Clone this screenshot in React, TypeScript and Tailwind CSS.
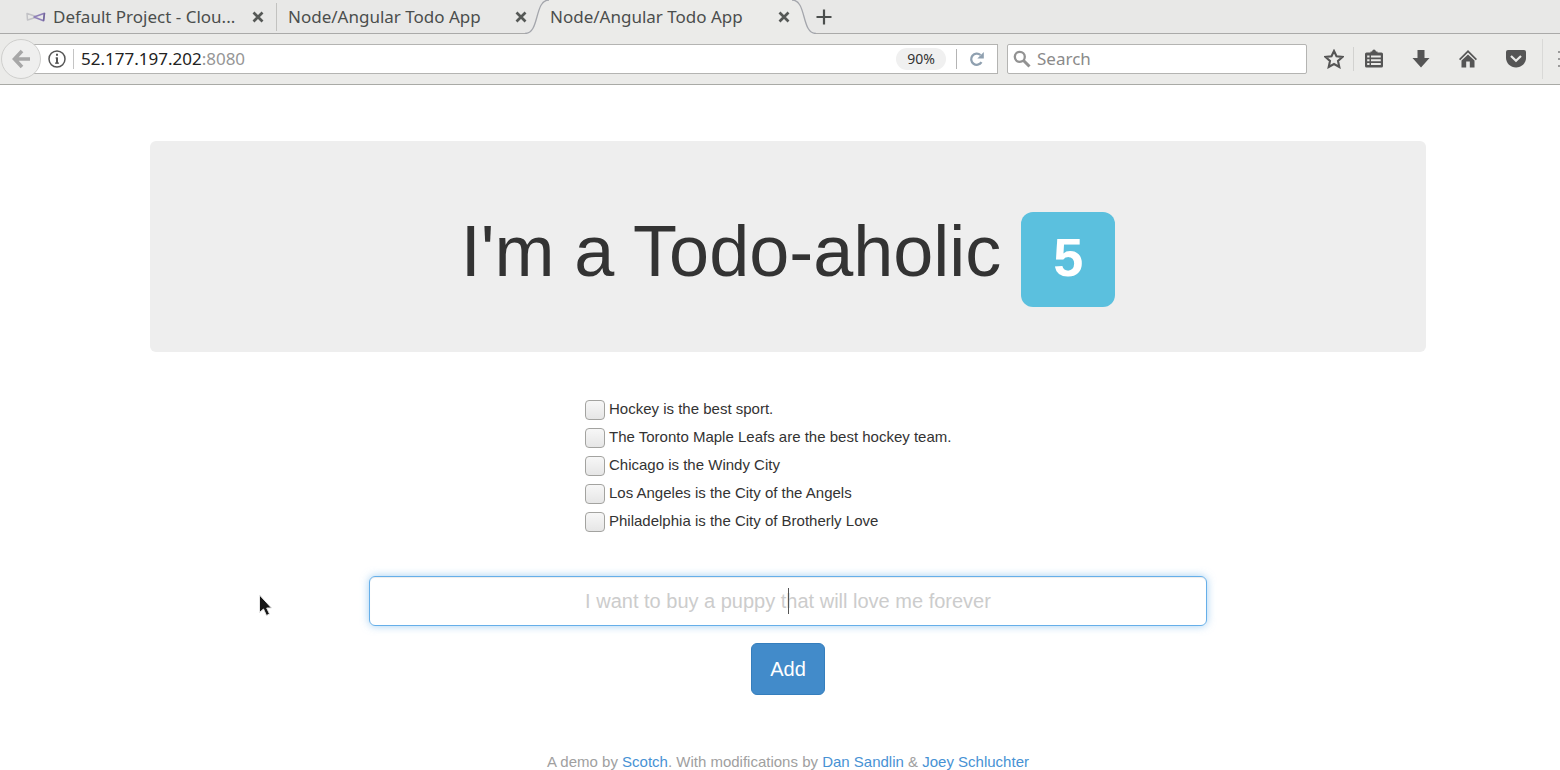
import React, { useState } from "react";

const chromeFont = "font-['Noto_Sans','Open_Sans',sans-serif]";

function CloseButton({ label }: { label: string }) {
  return (
    <button type="button" aria-label={label} className="flex h-4 w-4 shrink-0 items-center justify-center">
      <svg viewBox="0 0 12 12" className="h-3 w-3" fill="none" stroke="#555856" strokeWidth="2.7">
        <path d="M1.5 1.5 10.5 10.5M10.5 1.5 1.5 10.5" />
      </svg>
    </button>
  );
}

function TabStrip() {
  return (
    <nav aria-label="Tabs" className="flex h-[34px] bg-[#e8e8e7] text-[17px] leading-8 text-[#4b4e4d]">
      <div className="flex w-[276px] shrink-0 items-center border-b border-[#aaaaa9] pl-[26px] pr-[10px]">
        <svg viewBox="0 0 20 10" className="mr-[7px] h-[10px] w-5 shrink-0" fill="none" strokeWidth="1.5" strokeLinejoin="round">
          <path d="M9.500 4.300 1 1.500 1.500 8 9.500 5.500" stroke="#c2c2c6" />
          <path d="M8 5 18.500 1.200 17.500 8.800Z" stroke="#8f80b8" />
          <path d="M18.500 1.200 17.500 8.800" stroke="#73669c" />
        </svg>
        <span className="flex-1 whitespace-nowrap">Default Project - Clou...</span>
        <CloseButton label="Close Default Project" />
      </div>
      <div className="flex w-[253px] shrink-0 items-center border-b border-[#aaaaa9]">
        <span className="h-7 w-px bg-[#c2c2c0]" />
        <span className="ml-[11px] flex-1 whitespace-nowrap">Node/Angular Todo App</span>
        <CloseButton label="Close first Todo App tab" />
      </div>
      <div className="-ml-1 flex w-[291px] shrink-0 items-center justify-between">
        <svg viewBox="0 0 24 34" className="h-[34px] w-6 shrink-0">
          <path d="M0 33.500C15 33.500 9 0 24 0V34H0Z" fill="#ebebe9" />
          <path d="M0 33.500C15 33.500 9 0 24 0" fill="none" stroke="#a4a6ac" strokeWidth="1.300" />
        </svg>
        <div className="flex h-full flex-1 items-center bg-[#ebebe9] pl-px">
          <span className="flex-1 whitespace-nowrap">Node/Angular Todo App</span>
          <CloseButton label="Close current tab" />
        </div>
        <svg viewBox="0 0 24 34" className="h-[34px] w-6 shrink-0">
          <path d="M0 0C15 0 9 33.500 24 33.500V34H0Z" fill="#ebebe9" />
          <path d="M0 0C15 0 9 33.500 24 33.500" fill="none" stroke="#a4a6ac" strokeWidth="1.300" />
        </svg>
      </div>
      <div className="flex flex-1 items-center border-b border-[#aaaaa9]">
        <button type="button" aria-label="New tab" className="h-4 w-4">
          <svg viewBox="0 0 16 16" className="h-4 w-4" stroke="#4b4e4d" strokeWidth="2.200">
            <path d="M8 .5V15.500M.5 8H15.500" />
          </svg>
        </button>
      </div>
    </nav>
  );
}

function ToolButton({ label, children }: { label: string; children: React.ReactNode }) {
  return (
    <button type="button" aria-label={label} className="h-5 w-5 shrink-0">
      <svg viewBox="0 0 20 20" className="h-5 w-5" fill="#555555">
        {children}
      </svg>
    </button>
  );
}

function Toolbar() {
  return (
    <div className="flex h-[51px] items-center overflow-hidden border-b border-[#a9aaa6] bg-[#ebebe9] pl-px text-[17px]">
      <button
        type="button"
        aria-label="Back"
        className="z-10 flex h-10 w-10 shrink-0 items-center justify-center rounded-full border border-[#cfcfcd] bg-[#efefee]"
      >
        <svg viewBox="0 0 20 20" className="h-5 w-5" fill="none" stroke="#a7a7a7" strokeWidth="3.600">
          <path d="M11 2 3.500 10 11 18M3.500 10H19" />
        </svg>
      </button>
      <div className="-ml-5 flex h-[30px] min-w-0 flex-1 items-center border border-[#b4b4b2] bg-white pl-[25px] pr-3">
        <svg viewBox="0 0 20 20" className="h-5 w-5 shrink-0" fill="none" stroke="#555">
          <circle cx="10" cy="10" r="8" strokeWidth="1.500" />
          <path d="M10 8.500V14.500" strokeWidth="2" />
          <path d="M8.500 9H10.500M8 14.200H12" strokeWidth="1.200" />
          <path d="M9 5.800H11" strokeWidth="2" />
        </svg>
        <span className="ml-[6px] h-5 w-px shrink-0 bg-[#c4c4c4]" />
        <div className="ml-[7px] flex-1 text-[#222222]">
          52.177.197.202<span className="text-[#969696]">:8080</span>
        </div>
        <button type="button" className="h-[22px] w-[50px] rounded-full bg-[#f0f0f0] text-sm leading-[22px] text-[#333333]">
          90%
        </button>
        <span className="ml-[10px] h-5 w-px bg-[#b4b4b4]" />
        <button type="button" aria-label="Reload" className="ml-3 h-4 w-4">
          <svg viewBox="0 0 16 16" className="h-4 w-4">
            <path d="M12.500 11.200A5.600 5.600 0 1 1 11.500 4" fill="none" stroke="#8fa0b0" strokeWidth="2.300" />
            <path d="M14.800 1V7.500H8.300Z" fill="#8fa0b0" />
          </svg>
        </button>
      </div>
      <label className="ml-[9px] flex h-[30px] w-[300px] shrink-0 items-center rounded-xs border border-[#b4b4b2] bg-white pl-[5px]">
        <svg viewBox="0 0 18 18" className="h-[18px] w-[18px] shrink-0" fill="none" stroke="#929292">
          <circle cx="6.800" cy="6.800" r="5" strokeWidth="2.300" />
          <path d="M10.500 10.500 16.500 16.500" strokeWidth="3" />
        </svg>
        <input aria-label="Search" placeholder="Search" className="ml-[6px] min-w-0 flex-1 outline-none placeholder:text-[#8a8a8a]" />
      </label>
      <div className="ml-[17px] flex shrink-0 items-center">
        <ToolButton label="Bookmark">
          <path
            d="M10 2 12.500 7.300 18.500 8 14 12 15.300 18 10 15 4.700 18 6 12 1.500 8 7.500 7.300Z"
            fill="none"
            stroke="#555555"
            strokeWidth="2.100"
          />
        </ToolButton>
        <span className="ml-[9px] mr-[10px] h-6 w-px bg-[#d2d2d0]" />
        <ToolButton label="Bookmarks menu">
          <path
            fillRule="evenodd"
            d="M6.500 3.500V2.500H8Q8.500 .5 10 .5T12 2.500H13.500V3.500H17.500Q19 3.500 19 5V17Q19 18.500 17.500 18.500H2.500Q1 18.500 1 17V5Q1 3.500 2.500 3.500ZM3.200 6.500V8.500H5.500V6.500ZM7 6.500V8.500H16.800V6.500ZM3.200 10.300V12.300H5.500V10.300ZM7 10.300V12.300H16.800V10.300ZM3.200 14.100V16.100H5.500V14.100ZM7 14.100V16.100H16.800V14.100Z"
          />
        </ToolButton>
        <span className="w-[27px]" />
        <ToolButton label="Downloads">
          <path d="M6.500 1H13.500V9H18.500L10 18.500 1.500 9H6.500Z" />
        </ToolButton>
        <span className="w-[27px]" />
        <ToolButton label="Home">
          <path d="M10 1 19 10 17.800 11.200 10 3.500 2.200 11.200 1 10Z" />
          <path d="M10 5.500 16.500 11.500V18.500H11.800V12.500H8.200V18.500H3.500V11.500Z" />
        </ToolButton>
        <span className="w-7" />
        <ToolButton label="Pocket">
          <path d="M2 1H18Q20 1 20 3V9C20 14 15.500 18.500 10 18.500S0 14 0 9V3Q0 1 2 1Z" />
          <path d="M5 7 10 11.800 15 7" fill="none" stroke="#ebebe9" strokeWidth="2.200" />
        </ToolButton>
        <span className="ml-4 h-10 w-px bg-[#d9d9d7]" />
        <button type="button" aria-label="Menu" className="ml-[15px] h-4 w-[2px]">
          <svg viewBox="0 0 2 16" className="h-4 w-[2px]" fill="#9a9a9a">
            <path d="M0 0H2V2H0ZM0 7H2V9H0ZM0 14H2V16H0Z" />
          </svg>
        </button>
      </div>
    </div>
  );
}

const todos = [
  "Hockey is the best sport.",
  "The Toronto Maple Leafs are the best hockey team.",
  "Chicago is the Windy City",
  "Los Angeles is the City of the Angels",
  "Philadelphia is the City of Brotherly Love",
];

export default function App() {
  const [text, setText] = useState("");
  return (
    <div className="relative h-screen overflow-hidden bg-white">
      <header className={chromeFont}>
        <TabStrip />
        <Toolbar />
      </header>
      <main className="pl-[150px] pr-[134px] pt-14 font-['Liberation_Sans',Arial,sans-serif] text-[#333333]">
        <div className="flex items-baseline justify-center rounded-md bg-[#eeeeee] pb-[45px] pt-[71px]">
          <h1 className="flex items-baseline gap-5 whitespace-nowrap text-[72px] leading-[72px]">
            I'm a Todo-aholic
            <span className="rounded-xl bg-[#5bc0de] px-8 pb-5 pt-[15px] text-[54px] font-bold leading-[60px] text-white">5</span>
          </h1>
        </div>
        <ul className="ml-[435px] mt-[43px]">
          {todos.map((todo) => (
            <li key={todo} className="h-7">
              <label className="flex items-start gap-1 text-[15px] leading-7">
                <input
                  type="checkbox"
                  className="mt-[5px] h-5 w-5 shrink-0 appearance-none rounded-sm border border-[#a3a3a0] bg-linear-to-b from-[#f7f7f7] to-[#e6e6e6]"
                />
                {todo}
              </label>
            </li>
          ))}
        </ul>
        <form className="mt-[41px] flex flex-col items-center" onSubmit={(e) => e.preventDefault()}>
          <div className="relative w-full max-w-[838px]">
            <input
              aria-label="New todo"
              value={text}
              onChange={(e) => setText(e.target.value)}
              placeholder="I want to buy a puppy that will love me forever"
              className="h-[50px] w-full rounded-md border border-[#66afe9] text-center text-xl caret-transparent shadow-[inset_0_1px_1px_rgba(0,0,0,0.075),0_0_9px_rgba(102,175,233,0.6)] outline-none placeholder:text-[#cccccc]"
            />
            <span className="absolute left-1/2 top-3 h-[26px] w-px bg-[#555555]" />
          </div>
          <button type="submit" className="mt-[17px] h-[52px] w-[74px] rounded-md border border-[#357ebd] bg-[#428bca] text-xl text-white">
            Add
          </button>
        </form>
        <footer className="mt-[57px] text-center text-[15px] leading-5 text-[#a0a0a0]">
          A demo by <a href="#scotch" className="text-[#4792d4]">Scotch</a>. With modifications by{" "}
          <a href="#dan" className="text-[#4792d4]">Dan Sandlin</a> &amp;{" "}
          <a href="#joey" className="text-[#4792d4]">Joey Schluchter</a>
        </footer>
      </main>
      <svg viewBox="0 0 16 24" className="pointer-events-none absolute left-[258px] top-[594px] h-6 w-4">
        <path d="M1.500 1V18.500L5.500 15 8.500 21.500 11.500 20 8.700 14H13.500Z" fill="#151515" stroke="#e6e6e6" strokeWidth="1" />
      </svg>
    </div>
  );
}
